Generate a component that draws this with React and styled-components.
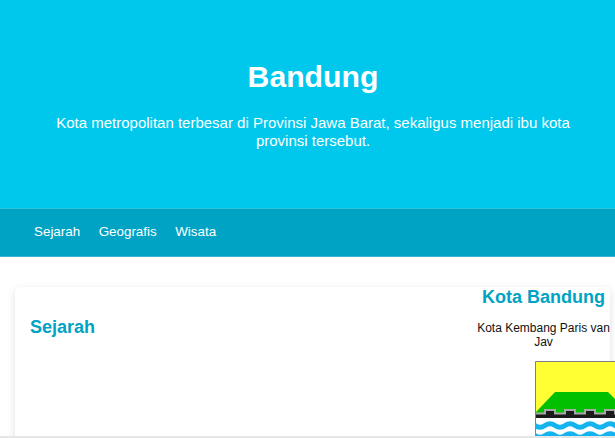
import React from "react";
import styled, { createGlobalStyle } from "styled-components";

const Global = createGlobalStyle`
  html, body { margin: 0; padding: 0; height: 100%; overflow: hidden; background: #fff; }
  * { box-sizing: border-box; }
`;

const Page = styled.div`
  width: 615px;
  height: 438px;
  display: flex;
  flex-direction: column;
  overflow: hidden;
  font-family: "Liberation Sans", Arial, sans-serif;
`;
const Hero = styled.header`
  flex: 0 0 208px;
  background: #00c8ec;
  color: #fff;
  text-align: center;
  padding: 60px 40px 0 51px;
`;
const HeroTitle = styled.h1`
  margin: 0;
  font-size: 30.2px;
  line-height: 34px;
  font-weight: 700;
`;
const HeroText = styled.p`
  margin: 20px 0 0;
  font-size: 15px;
  line-height: 18px;
`;
const Nav = styled.nav`
  flex: 0 0 49px;
  background: #00a3c4;
  border-top: 1px solid #2fc3dd;
  border-bottom: 1px solid #35b4d0;
  display: flex;
  align-items: center;
  gap: 18.5px;
  padding: 0 34px 2px;
`;
const NavLink = styled.a`
  color: #fff;
  font-size: 13.4px;
`;
const Main = styled.main`
  flex: 1;
  min-height: 0;
  overflow: visible;
  padding: 30px 5px 0 15px;
`;
const Card = styled.section`
  background: #fff;
  border-radius: 5px;
  box-shadow: 0 3px 8px rgba(0, 0, 0, 0.13);
  height: 240px;
  display: flex;
  justify-content: space-between;
  padding-left: 15px;
`;
const Heading = styled.h2`
  margin: 30px 0 0;
  color: #00a3c4;
  font-size: 18px;
  line-height: 20px;
  font-weight: 700;
`;
const Aside = styled.aside`
  flex: 0 0 135px;
  min-width: 0;
  margin-right: -1px;
  text-align: center;
`;
const AsideTitle = styled(Heading)`
  margin: 0;
  line-height: 21px;
`;
const AsideText = styled.p`
  margin: 13px 0 0;
  font-size: 12px;
  line-height: 14px;
  color: #111;
`;
const Crest = styled.svg`
  display: block;
  margin: 12px 0 0 59px;
`;
const BottomBar = styled.div`
  flex: 0 0 2px;
  background: #e6e6e6;
  position: relative;
`;

const wave = (y) => {
  let d = `M-10 ${y}`;
  for (let x = -10; x < 90; x += 20) d += ` q5 -3.5 10 0 t10 0`;
  return d;
};

const teeth = [9, 29, 49, 69];

const CrestIcon = () => (
  <Crest width="90" height="90" viewBox="0 0 90 90">
    <path d="M.5.5H90V90H6Q.5 82 .5 74Z" fill="#fff" stroke="#808080" />
    <rect x="1" y="1" width="89" height="51" fill="#ffff33" />
    <path d="M1 51 20 31H73L90 48V52H1Z" fill="#00c000" />
    <rect x="1" y="53" width="89" height="4" fill="#1a1a1a" />
    <path
      d="M1 52.5H10V49H20V52.5H30V49H40V52.5H50V49H60V52.5H70V49H80V52.5H90"
      fill="none"
      stroke="#a8a8a8"
      strokeWidth="2"
    />
    {teeth.map((x) => (
      <rect key={x} x={x + 2} y="50" width="8" height="4" fill="#1a1a1a" />
    ))}
    <path d={wave(64.5)} fill="none" stroke="#16b4ee" strokeWidth="5" />
    <path d={wave(74.5)} fill="none" stroke="#16b4ee" strokeWidth="5" />
  </Crest>
);

export default function App() {
  return (
    <Page>
      <Global />
      <Hero>
        <HeroTitle>Bandung</HeroTitle>
        <HeroText>
          Kota metropolitan terbesar di Provinsi Jawa Barat, sekaligus menjadi ibu kota provinsi tersebut.
        </HeroText>
      </Hero>
      <Nav>
        <NavLink>Sejarah</NavLink>
        <NavLink>Geografis</NavLink>
        <NavLink>Wisata</NavLink>
      </Nav>
      <Main>
        <Card>
          <Heading>Sejarah</Heading>
          <Aside>
            <AsideTitle>Kota Bandung</AsideTitle>
            <AsideText>Kota Kembang Paris van Jav</AsideText>
            <CrestIcon />
          </Aside>
        </Card>
      </Main>
      <BottomBar />
    </Page>
  );
}
